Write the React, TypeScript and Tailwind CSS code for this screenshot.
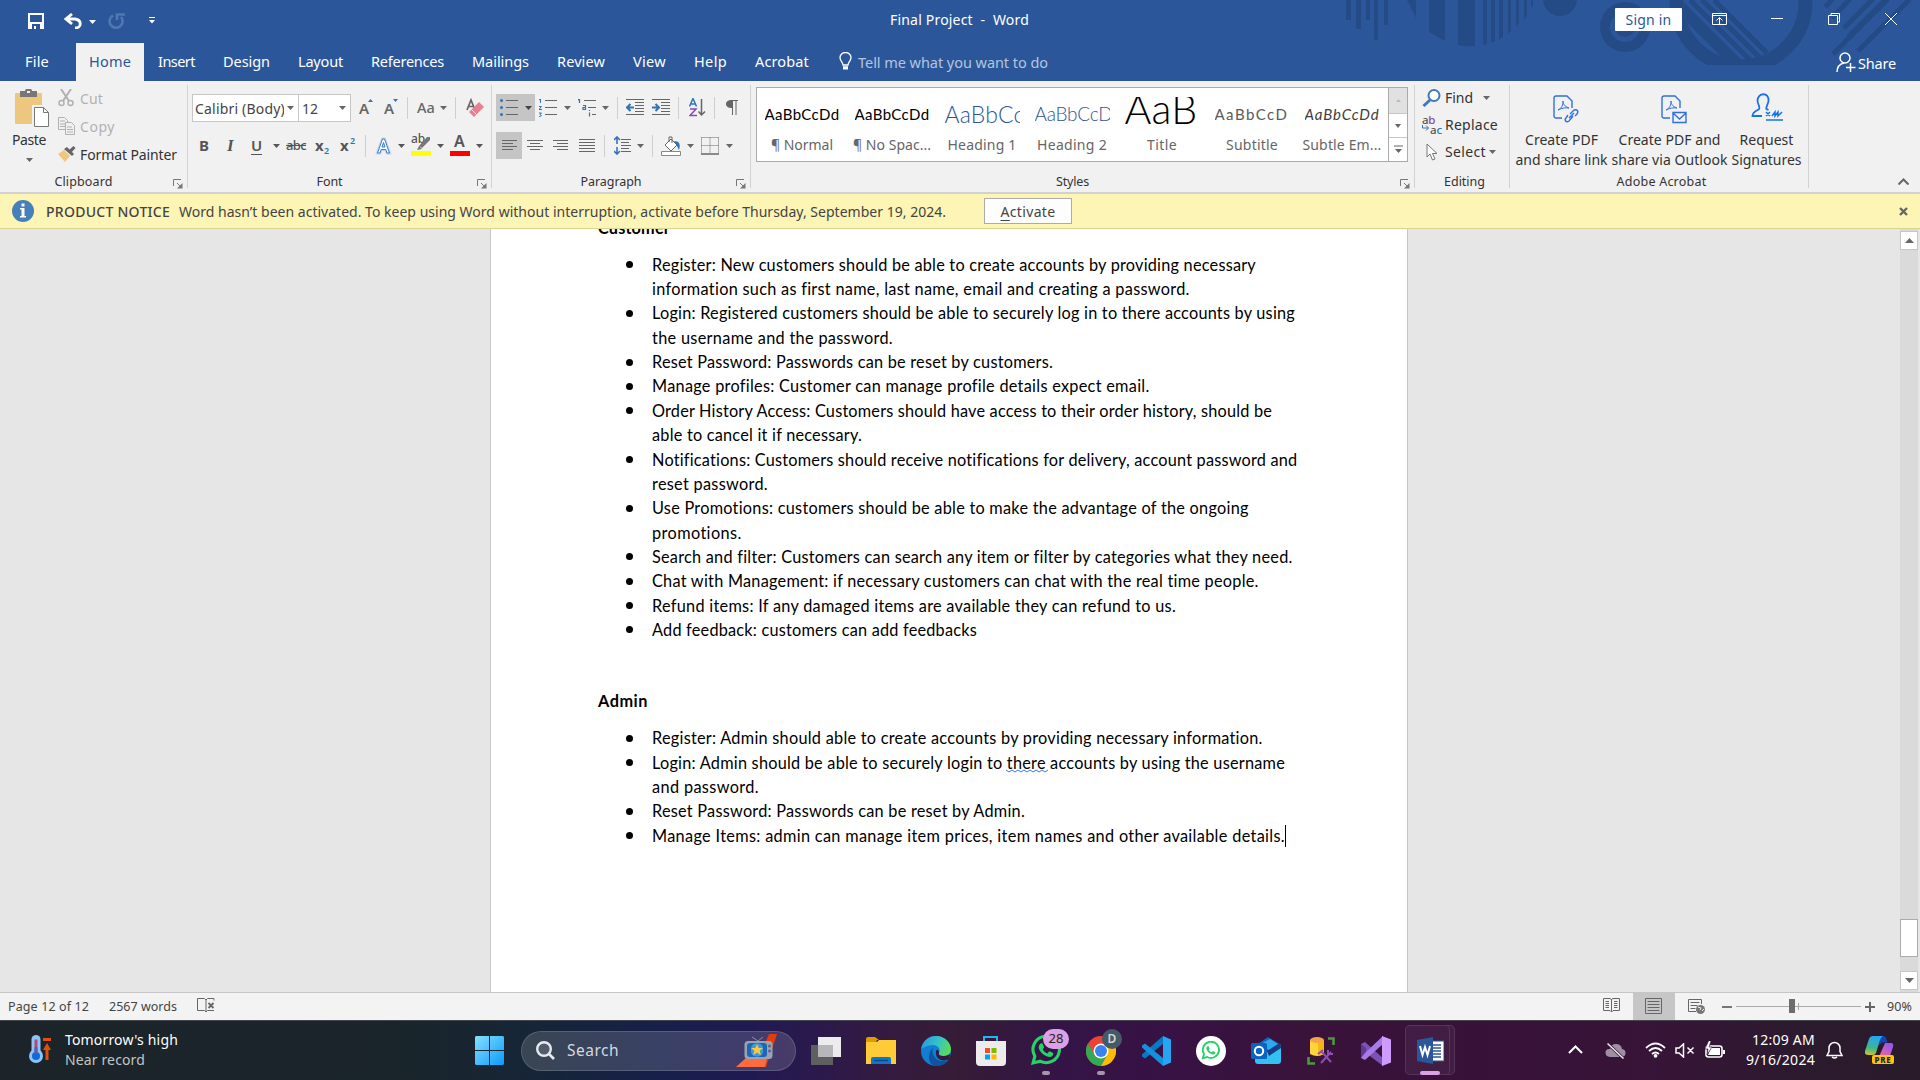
import React, { useLayoutEffect, useRef, useState } from "react";

type Kids = { children?: React.ReactNode };

/* Text run whose tracking is computed so that it fills the given width. */
function T({ w, className = "", children }: { w: number; className?: string } & Kids) {
  const ref = useRef<HTMLSpanElement>(null);
  const [ls, setLs] = useState(0);
  useLayoutEffect(() => {
    const el = ref.current;
    if (!el) return;
    const n = (el.textContent || "").length;
    setLs((w - el.getBoundingClientRect().width) / Math.max(1, n));
  }, [w]);
  return (
    <span className={"block shrink-0 whitespace-pre " + className} style={{ width: w }}>
      <span ref={ref} className="inline-block" style={{ letterSpacing: ls }}>
        {children}
      </span>
    </span>
  );
}

function Svg({ w, h, className = "", children }: { w: number; h: number; className?: string } & Kids) {
  return (
    <svg width={w} height={h} viewBox={`0 0 ${w} ${h}`} fill="none" className={"block shrink-0 " + className}>
      {children}
    </svg>
  );
}

const Caret = ({ className = "" }: { className?: string }) => (
  <Svg w={7} h={4} className={className}>
    <path d="M0 0h7L3.5 4z" fill="currentColor" />
  </Svg>
);
const Sep = ({ className = "" }: { className?: string }) => <div className={"h-[22px] w-px shrink-0 bg-[#cfcfcf] " + className} />;
const Launcher = ({ className = "" }: { className?: string }) => (
  <Svg w={10} h={10} className={className}>
    <path d="M.5 7V.5H8M4 4l3 3" stroke="#777" />
    <path d="M9.5 4v5.500H4z" fill="#777" />
  </Svg>
);

function Decor() {
  return (
    <Svg w={580} h={66} className="absolute left-[1340px] top-0">
      <g fill="#244b85">
        <path d="M6 0h5v20H6zM16 0h5v29h-5zM26 0h4v20h-4zM34 0h4v40h-4zM44 0h4v25h-4zM67 0h9v18z" />
        <path d="M89 0h16v41l-16-9zM118 0h17v46q-9 1-17-1zM143 0h4v44l-4 1zM151 0h4v41l-4 2zM159 0h4v37l-4 3zM168 0h3v31l-3 3zM176 0h3v23l-3 4zM184 0h3v16l-3 4zM191 0h2v5l-2 4z" />
        <circle cx="220" cy="-1" r="17" />
        <circle cx="285" cy="27" r="10" />
      </g>
      <circle cx="285" cy="27" r="20" stroke="#244b85" strokeWidth="10" />
      <clipPath id="ring"><path d="M0 0h580v65H0z" /></clipPath>
      <clipPath id="disc"><circle cx="402" cy="3" r="58" /></clipPath>
      <circle cx="401" cy="2" r="64.500" stroke="#244b85" strokeWidth="14" clipPath="url(#ring)" />
      <g clipPath="url(#disc)" stroke="#244b85">
        <path d="M333 0l70 70" strokeWidth="12" />
        <path d="M350 0l64 64M362 0l58 58M374 0l53 53" strokeWidth="5" />
      </g>
      <path d="M485 7l8-8M492 18l18-19M493 54l55-55M504 28l29-29M518 51l52-52M508 37l38-38" stroke="#244b85" strokeWidth="5" />
    </Svg>
  );
}

function TitleBar() {
  return (
    <div className="relative flex h-[43px] items-start text-white">
      <Svg w={16} h={16} className="ml-7 mt-[13px]">
        <path d="M1 1h14v14H1z" stroke="#fff" strokeWidth="2" />
        <path d="M1 9h14v6H1z" fill="#fff" />
        <path d="M4 11h8v5H4z" fill="#2b579a" /><path d="M6 13h2v3H6z" fill="#fff" /><path d="M4 11h8v2H4zM9 12h2v3H9z" fill="#2b579a" />
      </Svg>
      <Svg w={18} h={16} className="ml-5 mt-[13px]">
        <path d="M8 1L2 6l6 5M3 6h8c7 1 7 9 0 9" stroke="#fff" strokeWidth="2.800" />
      </Svg>
      <Caret className="ml-[7px] mt-5" />
      <Svg w={17} h={16} className="ml-3 mt-[13px]">
        <path d="M5 2.500A6.500 6.500 0 1 0 13 4M9 7V1.500h8" stroke="#5077b0" strokeWidth="2.600" />
      </Svg>
      <Svg w={6} h={7} className="ml-6 mt-[17px]">
        <path d="M0 .5h6" stroke="#fff" /><path d="M0 3h6L3 6.500z" fill="#fff" />
      </Svg>
      <T w={139} className="ml-[735px] mt-[9px] text-[14px] leading-[22px]">Final Project  -  Word</T>
      <div className="ml-[586px] mt-2 flex h-[23px] w-[67px] justify-center rounded-[1px] bg-white leading-[23px] text-[#2b579a]">
        <T w={46} className="text-[14px]">Sign in</T>
      </div>
      <Svg w={15} h={12} className="ml-[30px] mt-[13px]">
        <path d="M.5 .5h14v11H.5zM0 2.500h15M7.500 11V5M4.500 7.500l3-3 3 3" stroke="#fff" />
      </Svg>
      <Svg w={12} h={12} className="ml-11 mt-[13px]"><path d="M0 5.500h12" stroke="#fff" /></Svg>
      <Svg w={12} h={12} className="ml-[45px] mt-[13px]"><path d="M.5 2.500h9v9h-9zM3 2V.5h8.500V9H10" stroke="#fff" /></Svg>
      <Svg w={12} h={12} className="ml-[45px] mt-[13px]"><path d="M0 0l12 12M12 0L0 12" stroke="#fff" /></Svg>
    </div>
  );
}

const tabs: [string, number][] = [
  ["Insert", 37], ["Design", 47], ["Layout", 45], ["References", 73], ["Mailings", 57],
  ["Review", 48], ["View", 33], ["Help", 33], ["Acrobat", 54],
];

function Tabs() {
  return (
    <div className="relative flex h-[38px] items-center text-[14.500px] text-white">
      <T w={24} className="ml-[25px]">File</T>
      <div className="ml-[27px] flex h-full w-[68px] items-center justify-center bg-[#f1f1f1] text-[#2b579a]">
        <T w={42}>Home</T>
      </div>
      <div className="ml-[14px] flex gap-[28px]">
        {tabs.map(([t, w]) => <T key={t} w={w}>{t}</T>)}
      </div>
      <Svg w={13} h={18} className="ml-[30px] -mt-[2px]">
        <path d="M4 13c0-3-3-4-3-7.500a5.500 5 0 0 1 11 0C12 9 9 10 9 13zM4 15h5" stroke="#fff" strokeWidth="1.300" />
        <path d="M4 15h5v2.500H4z" fill="#fff" />
      </Svg>
      <T w={190} className="ml-[6px] mt-[2px] text-[#b5c4de]">Tell me what you want to do</T>
      <Svg w={20} h={21} className="ml-[788px]">
        <circle cx="9" cy="6" r="5" stroke="#fff" strokeWidth="1.500" />
        <path d="M1 20c0-5 3-8 7-9M14.500 11v9M10 15.500h9.500" stroke="#fff" strokeWidth="1.500" />
      </Svg>
      <T w={38} className="ml-[2px] mt-[3px]">Share</T>
    </div>
  );
}

function Group({ className = "", label, lw, launcher, children }: { className?: string; label: string; lw: number; launcher?: boolean } & Kids) {
  return (
    <div className={"relative flex h-[111px] shrink-0 flex-col " + className}>
      <div className="h-[91px]">{children}</div>
      <div className="flex h-[20px] items-center justify-center pt-[1px] text-[12.500px] text-[#333]">
        <div className={"flex flex-1 justify-center " + (launcher ? "pr-[3px]" : "pl-[4px]")}><T w={lw}>{label}</T></div>
        {launcher && <Launcher className="ml-[3px] mr-[5px] mt-[2px]" />}
      </div>
      <div className="absolute right-0 top-[4px] h-[103px] w-px bg-[#d2d2d2]" />
    </div>
  );
}

function Clipboard() {
  return (
    <Group className="w-[188px]" label="Clipboard" lw={58} launcher>
      <div className="flex">
        <div className="flex w-[58px] flex-col items-center pt-2 text-[14px] text-[#333]">
          <Svg w={34} h={39} className="ml-[6px]">
            <rect x="0" y="4" width="27" height="31" rx="1" fill="#eec77f" />
            <path d="M5 2h5q0-2.500 3.500-2.500T17 2h5v6H5z" fill="#777" /><path d="M12 2h3v2h-3z" fill="#eee" />
            <path d="M18.500 17.500h10l5 5v15h-15z" fill="#fff" stroke="#f1f1f1" strokeWidth="3" />
            <path d="M19.500 18.500h9l5 5v14h-14zM28.500 18.500v5h5" fill="#fff" stroke="#777" />
          </Svg>
          <T w={34} className="mt-[2px] leading-[20px]">Paste</T>
          <Caret className="mt-[8px] text-[#666]" />
        </div>
        <div className="pt-[3px] text-[14px] text-[#b1b1b1]">
          <div className="flex h-[28px] items-center">
            <Svg w={17} h={18}>
              <g stroke="#b1b1b1" strokeWidth="2"><path d="M3 0l8 12M13 0L5 12" /><circle cx="3.500" cy="14" r="2.500" strokeWidth="1.500" /><circle cx="12.500" cy="14" r="2.500" strokeWidth="1.500" /></g>
            </Svg>
            <T w={23} className="ml-[5px]">Cut</T>
          </div>
          <div className="flex h-[28px] items-center">
            <Svg w={18} h={18}>
              <path d="M.5 .5h6l3 3v9h-9zM2 4h5M2 7h5M2 9.500h5" stroke="#b1b1b1" />
              <path d="M7.500 5.500h6l3 3v9h-9zM9 10h5M9 12.500h6M9 15h6" fill="#f1f1f1" stroke="#b1b1b1" />
            </Svg>
            <T w={35} className="ml-[4px]">Copy</T>
          </div>
          <div className="flex h-[28px] items-center text-[#333]">
            <Svg w={18} h={16}>
              <path d="M0 8l6-4 6 6-5 6z" fill="#eec77f" /><path d="M6 3l3-2 7 7-2 2z" fill="#666" /><path d="M11 4l4.500-4 2 2-4.500 5z" fill="#666" />
            </Svg>
            <T w={97} className="ml-[4px]">Format Painter</T>
          </div>
        </div>
      </div>
    </Group>
  );
}

function FontGroup() {
  return (
    <Group className="w-[304px]" label="Font" lw={26} launcher>
      <div className="mt-[13px] flex h-[28px] items-center pl-[4px] text-[#666]">
        <div className="flex h-[28px] w-[107px] items-center border border-[#c6c6c6] bg-white text-[14px] text-[#444]">
          <div className="ml-[2px] w-[89px] overflow-hidden"><T w={90}>Calibri (Body)</T></div>
          <Caret className="ml-[3px] text-[#666]" />
        </div>
        <div className="-ml-px flex h-[28px] w-[53px] items-center border border-[#c6c6c6] bg-white text-[14px] text-[#444]">
          <T w={16} className="ml-[3px]">12</T>
          <Caret className="ml-[21px] text-[#666]" />
        </div>
        <T w={11} className="ml-[8px] text-[15px] font-semibold">A</T>
        <Svg w={5} h={3} className="-mt-[15px] ml-[-2px]"><path d="M0 3h5L2.500 0z" fill="#2e75b6" /></Svg>
        <T w={11} className="ml-[11px] text-[15px] font-semibold">A</T>
        <Svg w={5} h={3} className="-mt-[15px] ml-[-2px]"><path d="M0 0h5L2.500 3z" fill="#2e75b6" /></Svg>
        <Sep className="ml-[9px]" />
        <T w={18} className="ml-[9px] text-[14.500px] font-medium">Aa</T>
        <Caret className="ml-[5px]" />
        <Sep className="ml-[8px]" />
        <Svg w={19} h={20} className="ml-[10px]">
          <path d="M1 12L5 2l4 10M2.500 8.500h5" stroke="#666" strokeWidth="1.700" />
          <path d="M3 14L13 4l5 5L8 19z" fill="#e87f93" /><path d="M5.500 11.500l5 5" stroke="#f8d8de" />
        </Svg>
      </div>
      <div className="mt-[10px] flex h-[27px] items-center pl-[11px] text-[#555]">
        <T w={10} className="text-[15px] font-bold">B</T>
        <T w={9} className="ml-[18px] font-['Liberation_Serif'] text-[17px] font-bold italic">I</T>
        <T w={11} className="ml-[15px] text-[15px] font-semibold [&>span]:underline [&>span]:underline-offset-[3px]">U</T>
        <Caret className="ml-[11px]" />
        <T w={20} className="ml-[6px] text-[13px] font-medium [&>span]:line-through">abc</T>
        <div className="ml-[9px] flex w-[15px] items-center"><T w={9} className="text-[15px] font-bold">x</T><T w={5} className="mt-[10px] text-[9px] font-semibold text-[#2e75b6]">2</T></div>
        <div className="ml-[10px] flex w-[15px] items-center"><T w={10} className="text-[15px] font-bold">x</T><T w={5} className="-mt-[10px] text-[9px] font-semibold text-[#2e75b6]">2</T></div>
        <Sep className="ml-[10px]" />
        <Svg w={17} h={18} className="ml-[9px]">
          <path d="M2.500 16L7.500 2h2l5 14h-2.500l-1.200-3.500H6.200L5 16zM7 10h3L8.500 5.500z" fill="#fff" stroke="#bcd6f2" strokeWidth="3" />
          <path d="M2.500 16L7.500 2h2l5 14h-2.500l-1.200-3.500H6.200L5 16zM7 10h3L8.500 5.500z" fill="#fff" stroke="#3f7fc4" />
        </Svg>
        <Caret className="ml-[6px]" />
        <div className="relative ml-[6px] h-[20px] w-[20px]">
          <T w={14} className="-mt-[5px] text-[12px] font-medium leading-[16px]">ab</T>
          <Svg w={20} h={16} className="absolute left-0 top-0"><path d="M6 14l2-4 3 3zM8 10l8-9h3v3l-8 8z" fill="#777" /></Svg>
          <div className="absolute bottom-0 h-[5px] w-[20px] bg-[#ffff00]" />
        </div>
        <Caret className="ml-[6px]" />
        <div className="relative ml-[6px] h-[20px] w-[20px]">
          <T w={12} className="-mt-[4px] ml-[4px] text-[16px] font-semibold leading-[18px]">A</T>
          <div className="absolute bottom-0 h-[5px] w-[20px] bg-[#ff0000]" />
        </div>
        <Caret className="ml-[6px]" />
      </div>
    </Group>
  );
}

function Paragraph() {
  const g = "#666";
  const b = "#2e75b6";
  return (
    <Group className="w-[259px]" label="Paragraph" lw={61} launcher>
      <div className="mt-[13px] flex h-[27px] items-center pl-[4px] text-[#666]">
        <div className="flex h-full w-[39px] items-center bg-[#c5c5c5]">
          <Svg w={18} h={18} className="ml-[4px]"><path d="M6 1.500h12M6 8.500h12M6 15.500h12" stroke={g} /><g fill={b}><circle cx="1.500" cy="1.500" r="1.500" /><circle cx="1.500" cy="8.500" r="1.500" /><circle cx="1.500" cy="15.500" r="1.500" /></g></Svg>
          <Caret className="ml-[7px] text-[#444]" />
        </div>
        <Svg w={18} h={18} className="ml-[4px]"><path d="M6 1.500h12M6 8.500h12M6 15.500h12" stroke={g} /><path d="M0 1l1.500-1v4M0 7.500h2.500L0 10.500h3M0 14h2.500L1 15.500l1.500 1L0 18" stroke={b} /></Svg>
        <Caret className="ml-[7px]" />
        <Svg w={18} h={18} className="ml-[7px]"><path d="M6 1.500h12M10 8.500h8M14 15.500h4" stroke={g} /><path d="M0 1l1.500-1v4M5 6.500h2.500v4H5v-2h2M11.500 11v1M11.500 13.500v4" stroke={b} strokeWidth="1.200" /></Svg>
        <Caret className="ml-[6px]" />
        <Sep className="ml-[8px]" />
        <Svg w={18} h={17} className="ml-[8px]"><path d="M0 .5h18M9 3.500h9M9 6.500h9M9 9.500h9M9 12.500h9M0 15.500h18" stroke={g} /><path d="M8 8.500H1M4.500 5L1 8.500 4.500 12" stroke={b} strokeWidth="2" /></Svg>
        <Svg w={18} h={17} className="ml-[8px]"><path d="M0 .5h18M9 3.500h9M9 6.500h9M9 9.500h9M9 12.500h9M0 15.500h18" stroke={g} /><path d="M0 8.500h7M3.500 5L7 8.500 3.500 12" stroke={b} strokeWidth="2" /></Svg>
        <Sep className="ml-[8px]" />
        <Svg w={17} h={19} className="ml-[10px]"><path d="M.5 8.500L4 .5l3.500 8M2 6h4" stroke={b} strokeWidth="1.500" /><path d="M1 11h6l-6 6.500h7" stroke="#8a4bb0" strokeWidth="1.500" /><path d="M12.500 1v16M9.500 13.500l3 3.500 3.500-3.500" stroke={g} strokeWidth="1.500" /></Svg>
        <Sep className="ml-[8px]" />
        <Svg w={12} h={15} className="ml-[11px]"><path d="M4 .5h8M6.500 0v15M10 0v15" stroke={g} /><path d="M6.500 0v8C2 8 0 6.500 0 4s2-4 6.500-4z" fill={g} /></Svg>
      </div>
      <div className="mt-[11px] flex h-[27px] items-center pl-[4px] text-[#666]">
        <div className="flex h-full w-[26px] items-center justify-center bg-[#c5c5c5]">
          <Svg w={15} h={12}><path d="M0 .5h15M0 3.500h11M0 6.500h15M0 9.500h11" stroke={g} /></Svg>
        </div>
        <Svg w={16} h={12} className="ml-[5px]"><path d="M0 .5h16M3 3.500h10M0 6.500h16M3 9.500h10" stroke={g} /></Svg>
        <Svg w={15} h={12} className="ml-[10px]"><path d="M0 .5h15M4 3.500h11M0 6.500h15M4 9.500h11" stroke={g} /></Svg>
        <Svg w={16} h={14} className="ml-[11px]"><path d="M0 .5h16M0 3.500h16M0 6.500h16M0 9.500h16M0 12.500h16" stroke={g} /></Svg>
        <Sep className="ml-[9px]" />
        <Svg w={17} h={19} className="ml-[9px]"><path d="M7 3.500h10M7 6.500h8M7 9.500h10M7 12.500h8M7 15.500h10" stroke={g} /><path d="M3 1v7M3 11v7M0 4l3-3 3 3M0 15l3 3 3-3" stroke="#3b6fc4" strokeWidth="1.600" /></Svg>
        <Caret className="ml-[6px]" />
        <Sep className="ml-[8px]" />
        <Svg w={20} h={20} className="ml-[8px]"><path d="M4 9l6-6 6 6-6 6z" fill="#fff" stroke={g} /><path d="M8 6V1h3v6" stroke={g} /><path d="M13 5c5 0 7 3 5 9l-2-4z" fill={b} /><path d="M.5 15.500h19v4H.5z" fill="#fff" stroke="#888" /></Svg>
        <Caret className="ml-[6px]" />
        <Svg w={18} h={18} className="ml-[7px]"><path d="M.5 .5h17M.5 .5v16M17.500 .5v16M9 .5v16M.5 8.500h17" stroke={g} strokeDasharray="1 1" /><path d="M0 17h18" stroke={g} strokeWidth="1.500" /></Svg>
        <Caret className="ml-[7px]" />
      </div>
    </Group>
  );
}

const styleItems: { name: string; lw: number; sample: string; sw: number; cls: string }[] = [
  { name: "¶ Normal", lw: 62, sample: "AaBbCcDd", sw: 75, cls: "text-[15px] text-black" },
  { name: "¶ No Spac...", lw: 78, sample: "AaBbCcDd", sw: 75, cls: "text-[15px] text-black" },
  { name: "Heading 1", lw: 69, sample: "AaBbCc", sw: 80, cls: "text-[23px] font-light text-[#2f5496]" },
  { name: "Heading 2", lw: 70, sample: "AaBbCcD", sw: 78, cls: "text-[19px] font-light text-[#2f5496]" },
  { name: "Title", lw: 30, sample: "AaB", sw: 73, cls: "-mt-[11px] text-[41px] font-light text-black" },
  { name: "Subtitle", lw: 52, sample: "AaBbCcD", sw: 74, cls: "text-[15px] text-[#5a5a5a]" },
  { name: "Subtle Em...", lw: 79, sample: "AaBbCcDd", sw: 75, cls: "text-[15px] italic text-[#404040]" },
];

function Styles() {
  return (
    <Group className="w-[664px]" label="Styles" lw={33} launcher>
      <div className="ml-[5px] mt-[6px] flex h-[75px] w-[652px] border border-[#ababab] bg-white">
        <div className="flex w-[631px]">
          {styleItems.map((s) => (
            <div key={s.name} className="flex w-[90px] flex-col items-center">
              <div className="mt-[9px] flex h-[34px] w-[75px] items-center overflow-hidden">
                <T w={s.sw} className={"font-['Lato'] leading-[34px] " + s.cls}>{s.sample}</T>
              </div>
              <T w={s.lw} className="mt-[3px] text-[14px] leading-[22px] text-[#666]">{s.name}</T>
            </div>
          ))}
        </div>
        <div className="flex flex-1 flex-col border-l border-[#ababab] text-[#666]">
          <div className="flex h-[25px] items-center justify-center bg-[#e1e1e1]"><Svg w={5} h={3}><path d="M0 3h5L2.500 0z" fill="#bbb" /></Svg></div>
          <div className="flex h-[25px] items-center justify-center border-y border-[#c6c6c6]"><Svg w={6} h={4}><path d="M0 0h6L3 4z" fill="#666" /></Svg></div>
          <div className="flex flex-1 items-center justify-center"><Svg w={9} h={9}><path d="M0 1h9" stroke="#666" /><path d="M1 4h7L4.500 8z" fill="#666" /></Svg></div>
        </div>
      </div>
    </Group>
  );
}

function Editing() {
  return (
    <Group className="w-[95px]" label="Editing" lw={41}>
      <div className="pl-[7px] pt-[3px] text-[14px] text-[#333]">
        <div className="flex h-[27px] items-center">
          <Svg w={19} h={18}><circle cx="12" cy="6.500" r="5.500" fill="#fff" stroke="#3f7ab8" strokeWidth="2" /><path d="M8 11l-6.500 6" stroke="#3f7ab8" strokeWidth="3" /></Svg>
          <T w={28} className="ml-[4px]">Find</T>
          <Caret className="ml-[10px] text-[#666]" />
        </div>
        <div className="flex h-[27px] items-center">
          <div className="relative h-[20px] w-[20px] text-[11.500px] font-medium leading-[10px] text-[#555]">
            <T w={13}>a<span className="text-[#8a4bb0]">b</span></T>
            <T w={12} className="ml-[8px]">a<span className="text-[#2e75b6]">c</span></T>
            <Svg w={8} h={7} className="absolute left-0 top-[10px]"><path d="M.5 0v3h6M4 .5L6.500 3 4 5.500" stroke="#2e75b6" /></Svg>
          </div>
          <T w={53} className="ml-[3px]">Replace</T>
        </div>
        <div className="flex h-[27px] items-center">
          <Svg w={12} h={18} className="ml-[4px]"><path d="M1 1v13l3-3 2.500 6 2.500-1-2.500-5.500H11z" fill="#fff" stroke="#777" /></Svg>
          <T w={41} className="ml-[7px]">Select</T>
          <Caret className="ml-[3px] text-[#666]" />
        </div>
      </div>
    </Group>
  );
}

const PdfPage = () => (
  <>
    <path d="M9 23H3a2 2 0 0 1-2-2V3a2 2 0 0 1 2-2h11l5 5v7" stroke="#2f6fe0" strokeWidth="1.400" />
    <path d="M5 15c4-2 5-5 5-9 0 4 3 6 6 7-4-.5-7 0-11 2z" stroke="#2f6fe0" />
  </>
);

function Acrobat() {
  return (
    <Group className="w-[299px]" label="Adobe Acrobat" lw={90}>
      <div className="flex pl-[4px] text-[14px] leading-[20px] text-[#333]">
        <div className="flex w-[95px] flex-col items-center pt-[14px]">
          <Svg w={26} h={29} className="ml-[8px]"><PdfPage /><path d="M17 19l4-4c3-1 5 1 3 4l-2 2M20 21l-4 5c-3 2-5-1-3-3l2-3M16 23l5-5" stroke="#2f6fe0" strokeWidth="1.400" /></Svg>
          <T w={73} className="mt-[6px]">Create PDF</T>
          <T w={92}>and share link</T>
        </div>
        <div className="flex w-[121px] flex-col items-center pt-[14px]">
          <Svg w={26} h={29} className="ml-[8px]"><PdfPage /><path d="M12 17.500h13v10H12zM12 18l6.500 6 6.500-6" fill="#f1f1f1" stroke="#2f6fe0" strokeWidth="1.400" /></Svg>
          <T w={102} className="mt-[6px]">Create PDF and</T>
          <T w={116}>share via Outlook</T>
        </div>
        <div className="flex w-[73px] flex-col items-center pt-[12px]">
          <Svg w={32} h={29}><path d="M11 23H1.500c0-4 3-5 6-6.500C10 15 7 12 6.500 8c0-9 12-9 11 0-.5 4-3 6-2 8l2 1" stroke="#1473e6" strokeWidth="1.800" /><path d="M15 27h17M15 19l4 4M19 19l-4 4M21 23l3-4v4l3-4v4l4-4" stroke="#1473e6" strokeWidth="1.500" /></Svg>
          <T w={54} className="mt-[8px]">Request</T>
          <T w={70}>Signatures</T>
        </div>
      </div>
    </Group>
  );
}

function Notice() {
  return (
    <div className="flex h-[36px] items-center border-b border-t border-[#d9d68e] bg-[#fcf5b5] text-[14px] text-[#444]">
      <Svg w={22} h={22} className="ml-3"><circle cx="11" cy="11" r="11" fill="#467fb9" /><path d="M9.500 3.500h3v3h-3zM8 8h4.500v8H14v1.500H8V16h1.500V9.500H8z" fill="#fff" /></Svg>
      <T w={124} className="ml-3 font-medium">PRODUCT NOTICE</T>
      <T w={767} className="ml-[9px]">Word hasn’t been activated. To keep using Word without interruption, activate before Thursday, September 19, 2024.</T>
      <div className="ml-[38px] flex h-[26px] w-[88px] items-center justify-center border border-[#ababab] bg-[#fdfdfd]">
        <T w={55}><span className="underline underline-offset-[3px]">A</span>ctivate</T>
      </div>
      <Svg w={9} h={9} className="ml-[827px]"><path d="M1 1l7 7M8 1L1 8" stroke="#666" strokeWidth="2.400" /></Svg>
    </div>
  );
}

type Line = { t: string; w: number; b?: boolean };
const customer: Line[] = [
  { b: true, w: 604, t: "Register: New customers should be able to create accounts by providing necessary" },
  { w: 538, t: "information such as first name, last name, email and creating a password." },
  { b: true, w: 643, t: "Login: Registered customers should be able to securely log in to there accounts by using" },
  { w: 241, t: "the username and the password." },
  { b: true, w: 401, t: "Reset Password: Passwords can be reset by customers." },
  { b: true, w: 497, t: "Manage profiles: Customer can manage profile details expect email." },
  { b: true, w: 620, t: "Order History Access: Customers should have access to their order history, should be" },
  { w: 210, t: "able to cancel it if necessary." },
  { b: true, w: 646, t: "Notifications: Customers should receive notifications for delivery, account password and" },
  { w: 116, t: "reset password." },
  { b: true, w: 597, t: "Use Promotions: customers should be able to make the advantage of the ongoing" },
  { w: 90, t: "promotions." },
  { b: true, w: 640, t: "Search and filter: Customers can search any item or filter by categories what they need." },
  { b: true, w: 607, t: "Chat with Management: if necessary customers can chat with the real time people." },
  { b: true, w: 524, t: "Refund items: If any damaged items are available they can refund to us." },
  { b: true, w: 325, t: "Add feedback: customers can add feedbacks" },
];
const admin: Line[] = [
  { b: true, w: 611, t: "Register: Admin should able to create accounts by providing necessary information." },
  { b: true, w: 633, t: "Login: Admin should be able to securely login to there accounts by using the username" },
  { w: 107, t: "and password." },
  { b: true, w: 373, t: "Reset Password: Passwords can be reset by Admin." },
  { b: true, w: 633, t: "Manage Items: admin can manage item prices, item names and other available details." },
];

function Lines({ rows, mark }: { rows: Line[]; mark?: boolean }) {
  return (
    <div>
      {rows.map((l, i) => (
        <div key={l.t} className="relative flex h-[24.350px] items-center">
          <div className="flex w-[54px] shrink-0 items-center pl-[28px]">
            {l.b && <div className="size-[7px] rounded-full bg-black" />}
          </div>
          <T w={l.w} className="leading-[24px]">{l.t}</T>
          {mark && i === 1 && (
            <Svg w={43} h={4} className="absolute left-[408px] top-[19px]">
              <path d="M0 1l3 2 3-2 3 2 3-2 3 2 3-2 3 2 3-2 3 2 3-2 3 2 3-2 3 2 3-2" stroke="#3b78e7" />
            </Svg>
          )}
          {mark && i === 4 && <div className="h-[22px] w-px bg-black" />}
        </div>
      ))}
    </div>
  );
}

function Document() {
  return (
    <div className="flex h-[763px] justify-between overflow-hidden bg-[#e6e6e6]">
      <div className="ml-[490px] h-full w-[918px] overflow-hidden border-x border-[#c6c6c6] bg-white pl-[107px] font-['Lato'] text-[16.300px] text-black">
        <T w={72} className="-mt-[13px] font-bold leading-[24px]">Customer</T>
        <div className="mt-[12.600px]"><Lines rows={customer} /></div>
        <T w={50} className="mt-[47px] font-bold leading-[24px]">Admin</T>
        <div className="mt-[13px]"><Lines rows={admin} mark /></div>
      </div>
      <div className="mr-[2px] flex w-[18px] flex-col bg-[#dadada] pb-[2px] pt-[2px]">
        <div className="flex h-[19px] items-center justify-center border border-[#c6c6c6] bg-white"><Svg w={9} h={5}><path d="M0 5h9L4.500 0z" fill="#666" /></Svg></div>
        <div className="mt-[669px] h-[38px] border border-[#ababab] bg-white" />
        <div className="mt-auto flex h-[19px] items-center justify-center border border-[#c6c6c6] bg-white"><Svg w={9} h={5}><path d="M0 0h9L4.500 5z" fill="#666" /></Svg></div>
      </div>
    </div>
  );
}

function StatusBar() {
  const g = "#666";
  return (
    <div className="flex h-[28px] items-center border-t border-[#c6c6c6] bg-[#f3f3f3] text-[12.500px] text-[#444]">
      <T w={81} className="ml-2 mt-[2px]">Page 12 of 12</T>
      <T w={68} className="ml-[20px] mt-[2px]">2567 words</T>
      <Svg w={18} h={15} className="-mt-[2px] ml-[20px]"><path d="M9 2L7.500 .5H.5v12h7L9 14l1.500-1.500h6.500M9 2v12M9 2l1.500-1.500h6.500v2" stroke={g} /><path d="M11.500 5l5 5M16.500 5l-5 5" stroke={g} strokeWidth="1.800" /></Svg>
      <Svg w={17} h={15} className="-mt-[2px] ml-[1388px]"><path d="M8.500 1.500L7 .5H.5v12H7l1.500 1.500 1.500-1.500h6.500V.5H10zM8.500 1v13M2.500 3.500H6M2.500 5.500H6M2.500 7.500H6M2.500 9.500H6M11 3.500h3.500M11 5.500h3.500M11 7.500h3.500M11 9.500h3.500" stroke={g} /></Svg>
      <div className="ml-[13px] flex h-full w-[42px] items-center justify-center bg-[#c6c6c6]">
        <Svg w={17} h={16} className="-ml-px -mt-px"><path d="M.5 .5h16v15H.5zM2.500 3.500h12M2.500 6.500h12M2.500 9.500h12M2.500 12.500h12" stroke={g} /></Svg>
      </div>
      <Svg w={18} h={16} className="ml-[13px]"><path d="M8 12.500H.5V.5h13V5M2.500 3.500h9M2.500 6.500h7M2.500 9.500h5" stroke={g} /><circle cx="12.500" cy="10.500" r="4.500" fill="#777" /><path d="M10 8l3 1-1 2M14 12l2-2" stroke="#eee" /></Svg>
      <div className="ml-[16px] h-[2px] w-[10px] bg-[#777]" />
      <div className="relative ml-[4px] flex h-[15px] w-[125px] items-center">
        <div className="h-px w-full bg-[#ababab]" />
        <div className="absolute left-[53px] top-0 h-[14px] w-[6px] bg-[#6d6d6d]" />
        <div className="absolute left-[62px] top-[4px] h-[7px] w-px bg-[#ababab]" />
      </div>
      <Svg w={10} h={10} className="ml-[4px]"><path d="M5 0v10M0 5h10" stroke="#666" strokeWidth="2" /></Svg>
      <T w={25} className="ml-[12px] mt-[2px]">90%</T>
    </div>
  );
}

function WaMark({ s, c }: { s: number; c: string }) {
  return (
    <svg width={s} height={s} viewBox="0 0 30 30" fill="none" className="block shrink-0">
      <path d="M3 27l1.700-6.500A12.800 12.800 0 1 1 9.800 25.300z" stroke={c} strokeWidth="3" />
      <path d="M10 8.500c1-.8 2-.5 2.500.5l1 2.500c.2.600-.2 1-1.200 2.200 1 2 2.500 3.300 4.500 4.100l1.400-1.600c.4-.4.8-.4 1.300-.2l2.500 1.200c1 .5.500 2.300-.5 3.200-1.400 1.200-3.500 1-6-.1-3.500-1.500-6.500-5-7-8-.2-1.500.5-3 1.500-3.800z" fill={c} />
    </svg>
  );
}

function TaskIcon({ children, dot }: { dot?: boolean } & Kids) {
  return (
    <div className="relative flex h-[60px] w-[55px] shrink-0 items-center justify-center">
      {children}
      {dot && <div className="absolute bottom-[6px] h-[4px] w-[8px] rounded-full bg-[#a597ab]" />}
    </div>
  );
}

function Taskbar() {
  return (
    <div className="flex h-[60px] items-center border-t border-[#43464d] bg-[linear-gradient(90deg,#1c2429_0px,#1a252b_400px,#162538_540px,#17204a_660px,#201a52_750px,#2c194b_820px,#351b3d_900px,#351c36_960px,#341447_1060px,#371244_1160px,#3a133a_1300px,#381139_1480px,#371438_1650px,#2c1a2e_1800px,#291b2a_1920px)] text-white">
      <Svg w={23} h={29} className="-mt-[3px] ml-[29px]">
        <rect x="2.500" y="0" width="9" height="22" rx="4.500" fill="#8cc4f7" /><circle cx="7" cy="21" r="7" fill="#8cc4f7" />
        <path d="M5.500 4.500h3V20h-3z" fill="#b14a78" /><circle cx="7" cy="21" r="4" fill="#0f6bd8" /><path d="M5.500 12h3v7h-3z" fill="#5a5ab0" />
        <path d="M14 3h8v3h-8zM16.500 25v-10H14l4-7 4 7h-2.500v10z" fill="#e0500c" />
      </Svg>
      <div className="-mt-[2px] ml-[13px] text-[14px] leading-[20px]">
        <T w={113}>Tomorrow's high</T>
        <T w={80} className="text-[#c2c5c7]">Near record</T>
      </div>
      <Svg w={29} h={29} className="ml-[297px]">
        <linearGradient id="win" x1="0" y1="0" x2="29" y2="29" gradientUnits="userSpaceOnUse"><stop stopColor="#86e0fd" /><stop offset="1" stopColor="#0a9bfb" /></linearGradient>
        <path d="M1 0h13v14H0V1zM15 0h13l1 1v13H15zM0 15h14v14H1l-1-1zM15 15h14v13l-1 1H15z" fill="url(#win)" />
      </Svg>
      <div className="ml-[17px] flex h-[40px] w-[275px] items-center rounded-full border border-white/15 bg-white/15">
        <Svg w={19} h={19} className="ml-[14px]"><circle cx="8" cy="8" r="6.800" stroke="#e6e9ee" strokeWidth="2.400" fill="#ffffff22" /><path d="M13 13l5 5" stroke="#e6e9ee" strokeWidth="2.600" /></Svg>
        <T w={52} className="ml-[12px] text-[15.500px] text-[#d4d8e0]">Search</T>
        <Svg w={41} h={34} className="ml-[117px]">
          <path d="M33 0h8L30 33H0l10-8h12z" fill="#e23c0c" /><path d="M0 33l10-9h21l-2 9z" fill="#ff6b3d" />
          <path d="M16 3l6 4 5-4" stroke="#8b90a5" /><rect x="8.500" y="7" width="28" height="18" rx="3.500" fill="#9aa2b8" />
          <rect x="11" y="9" width="20" height="14" rx="3" fill="#1c67b4" /><rect x="15" y="9.500" width="12" height="13" rx="5" fill="#3b9be0" />
          <path d="M21 10l1.700 4h4.300l-3.400 2.800 1.300 4.400-3.900-2.600-3.900 2.600 1.300-4.400-3.400-2.800h4.300z" fill="#ffc73a" />
          <circle cx="33.500" cy="12" r="1.500" fill="#5c6480" /><circle cx="33.500" cy="17" r="1.500" fill="#5c6480" />
        </Svg>
      </div>
      <div className="ml-[2px] flex">
        <TaskIcon>
          <Svg w={30} h={28}><path d="M0 8h22v20H0z" fill="#5f5f62" /><path d="M7 0h23v20H7z" fill="#ececee" /><path d="M7 8h15v12H7z" fill="#b7b7ba" /></Svg>
        </TaskIcon>
        <TaskIcon>
          <Svg w={30} h={27}><path d="M0 2q0-2 2-2h7l4 3h-2l-1 3H0z" fill="#dd9c00" /><path d="M0 5h11l2-2h17v24H0z" fill="#ffcc38" /><path d="M5 27v-5q0-2 2-2h16q2 0 2 2v5z" fill="#0f75cf" /><path d="M8 23.500h14" stroke="#084a90" strokeWidth="1.500" /></Svg>
        </TaskIcon>
        <TaskIcon>
          <Svg w={30} h={30}>
            <linearGradient id="eg" x1="3" y1="6" x2="29" y2="16" gradientUnits="userSpaceOnUse"><stop stopColor="#2a9fe0" /><stop offset=".5" stopColor="#35c6c3" /><stop offset="1" stopColor="#62dd45" /></linearGradient>
            <circle cx="15" cy="15" r="15" fill="#0f7fd6" />
            <path d="M0 13C2 4 8 0 15 0c9 0 15 7 15 13 0 5-4 7-7 7-4 0-6-1-5-3 2-4-1-8-6-8-6 0-10 3-12 4z" fill="url(#eg)" />
            <path d="M12 12c-2 7 3 14 11 13 2 0 4-1 5-1.500C24 30 16 31 13 29.500 6 27 7 15 12 12z" fill="#12529f" />
            <path d="M18 17c-1 2 1 3 5 3 3 0 5-1 6.500-2.500L28 23c-7 4-14-1-13-7 0-3 3-3 3 1z" fill="#321a3c" />
          </Svg>
        </TaskIcon>
        <TaskIcon>
          <Svg w={30} h={30}><path d="M8 6V1h13v5" stroke="#2ab2ee" strokeWidth="2" /><path d="M0 5h30v21q0 4-4 4H4q-4 0-4-4z" fill="#ececec" /><path d="M9 12h5v5H9z" fill="#f25022" /><path d="M15.500 12h5v5h-5z" fill="#7fba00" /><path d="M9 18.500h5v5H9z" fill="#00a4ef" /><path d="M15.500 18.500h5v5h-5z" fill="#ffb900" /></Svg>
        </TaskIcon>
        <TaskIcon dot>
          <WaMark s={31} c="#25d366" />
          <div className="absolute left-[25px] top-[8px] flex h-[20px] w-[26px] items-center justify-center rounded-full bg-[#dba0e6] text-[13px] text-[#222]"><T w={15}>28</T></div>
        </TaskIcon>
        <TaskIcon dot>
          <Svg w={30} h={30}>
            <circle cx="15" cy="15" r="15" fill="#ea4335" /><path d="M2 7.500A15 15 0 0 0 15 30l6.500-11.500L8.500 18.700z" fill="#34a853" /><path d="M28 7.500A15 15 0 0 1 15 30l6.500-11.500L21.500 9z" fill="#fbbc05" />
            <circle cx="15" cy="15" r="7.500" fill="#fff" /><circle cx="15" cy="15" r="6" fill="#3b82f0" />
          </Svg>
          <div className="absolute left-[29px] top-[8px] flex size-[20px] items-center justify-center rounded-full bg-[#455a64] text-[12px] font-semibold text-[#cfd8dc]"><T w={9}>D</T></div>
        </TaskIcon>
        <TaskIcon>
          <Svg w={30} h={30}><path d="M22 0l8 3.500v23L22 30z" fill="#27a5f2" /><path d="M22 0v8L4 22.500 1 20.500v-2z" fill="#0a79c4" /><path d="M22 30v-8L4 7.500 1 9.500v2z" fill="#1590dd" /></Svg>
        </TaskIcon>
        <TaskIcon><div className="flex size-[30px] items-center justify-center rounded-full bg-white"><WaMark s={19} c="#25d366" /></div></TaskIcon>
        <TaskIcon>
          <Svg w={30} h={27}><path d="M4 9L17 0l13 8v3L17 20 4 16z" fill="#1067b8" /><path d="M8 8L19 2l8 5-9 6z" fill="#2fa8ee" /><path d="M4 19l26-9v14q0 3-3 3H7q-3 0-3-3z" fill="#35c0f2" /><path d="M16 14l13-8 1 5-12 8z" fill="#123f86" /><rect x="0" y="6" width="16" height="16" rx="1.500" fill="#0a64c0" /><circle cx="8" cy="14" r="4.200" stroke="#fff" strokeWidth="2" /></Svg>
        </TaskIcon>
        <TaskIcon>
          <Svg w={28} h={28}><path d="M3 3v14q7 4 14 0V3z" fill="#ffd43b" /><path d="M11 3h6v14l-6 2z" fill="#f2b90f" /><ellipse cx="10" cy="3" rx="7" ry="3" fill="#f5a34a" /><path d="M21 1.500h5.500V8M1.500 20v6.500H8" stroke="#4c9a3d" strokeWidth="2.600" /><path d="M14 14l10 11M24 15L14 26M11 17l5-4M21 13v4h5" stroke="#8f4fae" strokeWidth="2" /></Svg>
        </TaskIcon>
        <TaskIcon>
          <Svg w={30} h={30}><path d="M0 8l4-2 20 18-2 6L5 17 0 22z" fill="#7a52b8" /><path d="M0 8l5 4v6l-5 4z" fill="#5e3a98" /><path d="M22 0L4 17l-4 5 4 2L22 8z" fill="#a97be6" /><path d="M21 0l9 3.500v23L21 30z" fill="#cf9bff" /></Svg>
        </TaskIcon>
        <div className="relative flex h-[60px] w-[55px] items-center justify-center">
          <div className="absolute left-[2px] top-[4px] h-[50px] w-[50px] rounded-[5px] border border-white/10 bg-white/5" />
          <div className="absolute left-[2px] top-[4px] h-[50px] w-[45px] rounded-[5px] border-r border-white/10" />
          <Svg w={27} h={27} className="relative">
            <path d="M15 4h12v20H15z" fill="#fff" stroke="#2b579a" /><path d="M16 8h8M16 11h8M16 14h8M16 17h8M16 20h8" stroke="#2b579a" strokeWidth="1.500" /><path d="M0 3l16-3v27L0 24z" fill="#2b579a" />
            <path d="M3 9l2.500 9L8 10l2.500 8L13 9" stroke="#fff" strokeWidth="2" />
          </Svg>
          <div className="absolute bottom-[6px] left-[17px] h-[4px] w-[20px] rounded-full bg-[#dba0e6]" />
        </div>
      </div>
      <Svg w={15} h={9} className="-mt-[2px] ml-[110px]"><path d="M1 8l6.500-6.500L14 8" stroke="#fff" strokeWidth="2" /></Svg>
      <Svg w={21} h={16} className="ml-[22px]"><path d="M5 14q-4.500-.5-4.500-4.500T5 6q1-5 6-5t6 5q3.500.5 3.500 4t-3.500 4z" fill="#a08fa3" /><path d="M2 0l17 16" stroke="#37143a" strokeWidth="3" /><path d="M2.500 .5l16 15" stroke="#eee" strokeWidth="1.500" /></Svg>
      <Svg w={21} h={16} className="-mt-[2px] ml-[19px]"><path d="M1 6q9.500-9 19 0M4 9q6.500-6 13 0M7 12q3.500-3 7 0" stroke="#fff" strokeWidth="1.800" /><circle cx="10.500" cy="13.800" r="1.900" fill="#fff" /></Svg>
      <Svg w={20} h={15} className="ml-[9px]"><path d="M1 5h3l4.500-4v13L4 10H1zM12.500 4.500l6 6M18.500 4.500l-6 6" stroke="#fff" strokeWidth="1.500" /></Svg>
      <Svg w={21} h={17} className="-mt-[3px] ml-[10px]"><rect x="1" y="5" width="16" height="11" rx="2.500" stroke="#fff" strokeWidth="1.600" /><path d="M3 14l3-7h9v7zM18 9h2v4h-2z" fill="#fff" /><path d="M4-1L0 8h3l-1 6 5-8H4l2-6z" fill="#fff" stroke="#37143a" strokeWidth=".6" /></Svg>
      <div className="-mt-[2px] ml-[21px] flex w-[68px] flex-col items-end text-[14px] leading-[20px]">
        <T w={63}>12:09 AM</T>
        <T w={69}>9/16/2024</T>
      </div>
      <Svg w={17} h={18} className="-mt-[1px] ml-[11px]"><path d="M1 14.500l2-4V7a5.500 5.500 0 0 1 11 0v3.500l2 4zM6 16q2.500 2 5 0" stroke="#fff" strokeWidth="1.500" /></Svg>
      <div className="relative ml-[22px]">
        <Svg w={30} h={29}>
          <linearGradient id="c1" x1="6" y1="0" x2="3" y2="20" gradientUnits="userSpaceOnUse"><stop stopColor="#26a5f2" /><stop offset=".6" stopColor="#3fb88a" /><stop offset="1" stopColor="#f0c419" /></linearGradient>
          <linearGradient id="c2" x1="24" y1="8" x2="16" y2="22" gradientUnits="userSpaceOnUse"><stop stopColor="#9a56ee" /><stop offset="1" stopColor="#f2688f" /></linearGradient>
          <path d="M15 0h3q2.500 0 3.500 3l1 3.500H17l-3 3z" fill="#1246b8" />
          <path d="M8 0h10q-2 1-3 4l-4 13q-1 2-3 2H3q-4 0-3-4L4 3Q5 0 8 0z" fill="url(#c1)" />
          <path d="M20 7h6q3 0 2 4l-4 12H13z" fill="url(#c2)" />
        </Svg>
        <div className="absolute left-[7px] top-[19px] flex h-[9px] w-[22px] items-center justify-center rounded-[2px] bg-[#ffc20e] text-[8px] font-extrabold leading-[9px] text-[#222]"><T w={17}>PRE</T></div>
      </div>
    </div>
  );
}

export default function App() {
  return (
    <div className="h-[1080px] w-[1920px] overflow-hidden bg-[#e6e6e6] font-['Noto_Sans',sans-serif]">
      <div className="relative h-[81px] bg-[#2b579a]">
        <Decor />
        <TitleBar />
        <Tabs />
      </div>
      <div className="relative flex h-[112px] border-b border-[#d2d2d2] bg-[#f1f1f1]">
        <Clipboard />
        <FontGroup />
        <Paragraph />
        <Styles />
        <Editing />
        <Acrobat />
        <Svg w={11} h={7} className="ml-[89px] mt-[97px]"><path d="M.5 6.500l5-5 5 5" stroke="#666" strokeWidth="2" /></Svg>
      </div>
      <Notice />
      <Document />
      <StatusBar />
      <Taskbar />
    </div>
  );
}
